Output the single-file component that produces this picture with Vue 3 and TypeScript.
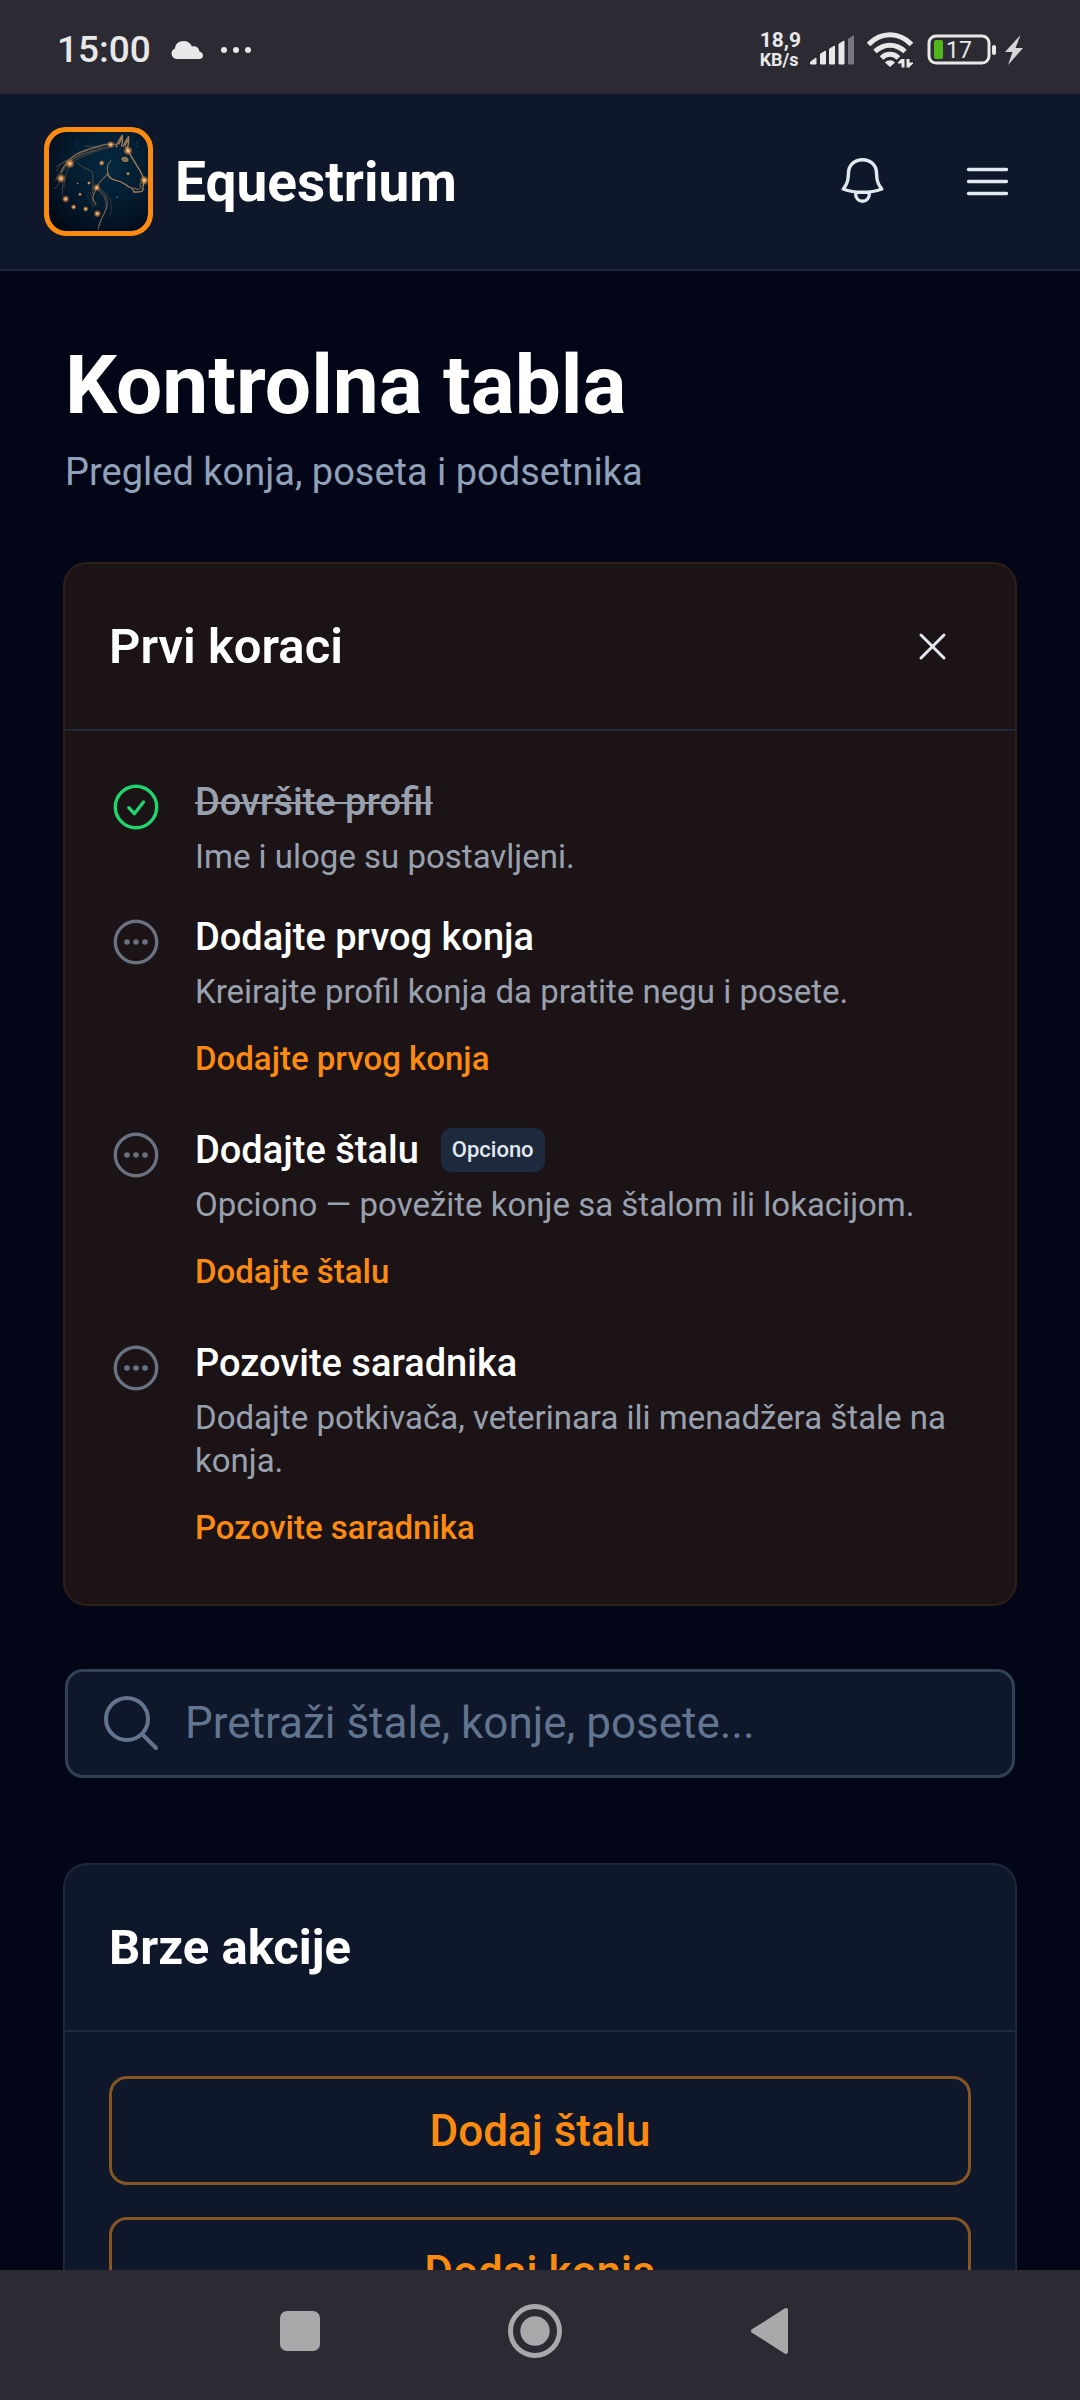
<script setup lang="ts">
import { ref } from 'vue'

interface Step {
  title: string
  text: string
  done?: boolean
  optional?: boolean
  action?: string
}

const steps: Step[] = [
  { title: 'Dovršite profil', text: 'Ime i uloge su postavljeni.', done: true },
  { title: 'Dodajte prvog konja', text: 'Kreirajte profil konja da pratite negu i posete.', action: 'Dodajte prvog konja' },
  { title: 'Dodajte štalu', text: 'Opciono — povežite konje sa štalom ili lokacijom.', optional: true, action: 'Dodajte štalu' },
  { title: 'Pozovite saradnika', text: 'Dodajte potkivača, veterinara ili menadžera štale na konja.', action: 'Pozovite saradnika' },
]

const actions = ['Dodaj štalu', 'Dodaj konja']
const query = ref('')

const stars = [
  [90, 131, 5], [63, 175, 5], [77, 237, 4], [172, 281, 4], [313, 181, 5], [264, 92, 5],
  [212, 74, 4], [185, 129, 3], [170, 203, 4], [101, 261, 3], [137, 267, 3], [120, 223, 2],
  [147, 189, 2], [264, 161, 2], [113, 190, 1],
]
</script>

<template>
  <div class="screen">
    <div class="status">
      <span class="time">15:00</span>
      <svg class="cloud" width="34" height="20" viewBox="0 0 34 20"><path d="M6 19a5.500 5.500 0 0 1-1-10.500C5 4 9 1 13.500 1c4 0 7 2 8.500 5.500 4-1 7 1.500 7.500 5 2 .5 3.500 2 3.500 4 0 2-1.500 3.500-3.500 3.500z" fill="#e8e8e8" /></svg>
      <svg class="dots" width="34" height="20" viewBox="0 0 34 20" fill="#e8e8e8"><circle cx="5" cy="10" r="3" /><circle cx="17" cy="10" r="3" /><circle cx="29" cy="10" r="3" /></svg>
      <div class="status-right">
        <div class="speed"><span class="rate">18,9</span><span class="unit">KB/s</span></div>
        <svg width="50" height="32" viewBox="0 0 50 32" fill="#e8e8e8">
          <path d="M1.500 28l5.500-4v6H1.500zM11.500 20l5-3v13h-5zM20.500 15l5-3v18h-5zM30 10l5-3v23h-5z" stroke="#e8e8e8" stroke-linejoin="round" />
          <path d="M39.500 5l5-3v28h-5z" fill="#79777d" stroke="#79777d" stroke-linejoin="round" />
        </svg>
        <svg width="52" height="36" viewBox="0 0 52 36" fill="none" stroke="#e8e8e8" stroke-width="5">
          <path d="M1.500 12.500C14-.5 32-.5 44.500 12.500M8 19.500c9-8.500 21-8.500 30 0M14.500 26c5-5 12-5 17 0" />
          <path d="M23 35l-5-4.500c3-3 7-3 10 0z" fill="#e8e8e8" stroke="none" />
          <path d="M36 35.500V27M41 27v8.500" stroke-width="3" />
          <path d="M31 31l3.500-4V31zM42 31h4l-4 4z" stroke-width="1" fill="#e8e8e8" />
        </svg>
        <svg width="69" height="32" viewBox="0 0 69 32">
          <rect x="2" y="2" width="60" height="27" rx="7" fill="none" stroke="#e8e8e8" stroke-width="3" />
          <rect x="7" y="6" width="9" height="19" rx="2" fill="#52b51b" />
          <rect x="65" y="11" width="4" height="10" rx="2" fill="#e8e8e8" />
          <text x="19" y="24" class="charge">17</text>
        </svg>
        <svg class="bolt" width="20" height="32" viewBox="0 0 20 32"><path d="M16.500 1L1 18h7.500L4 31l15-17h-7.500z" fill="#d6d5d8" /></svg>
      </div>
    </div>

    <header class="topbar">
      <div class="logo">
        <svg viewBox="27 36 297 297" role="img" aria-label="Equestrium logo">
          <defs>
            <radialGradient id="night" cx=".6" cy=".35" r=".75"><stop offset="0" stop-color="#05293f" /><stop offset=".55" stop-color="#041b2e" /><stop offset="1" stop-color="#020b18" /></radialGradient>
            <radialGradient id="glow"><stop offset="0" stop-color="#ffe9bd" /><stop offset=".3" stop-color="#f5a55c" stop-opacity=".9" /><stop offset="1" stop-color="#d87a30" stop-opacity="0" /></radialGradient>
          </defs>
          <rect x="27" y="36" width="297" height="297" fill="url(#night)" />
          <g fill="none" stroke="#a27e58" stroke-linecap="round" stroke-linejoin="round">
            <path d="M258 82c5 6 8 14 13 22 10 20 26 40 35 60 4 8 6 14 6 22-1 8-5 14-3 22 0 6-7 8-14 8h-13" stroke-width="4" />
            <path d="M282 216c-3-4-2-8-6-11-9-4-16-8-22-13-9-6-16-9-26-11-10-1-20-8-26-20" stroke-width="4" />
            <path d="M302 190c-4 5-2 11 2 15M281 203c5 5 11 6 18 4" stroke-width="3" />
            <path d="M229 80c2-12 9-22 18-34 1 10 2 20-2 32M250 79c3-12 8-19 16-29 0 11 1 21-4 35M237 72l8-18M256 76l7-16" stroke-width="4" />
            <path d="M246 117c5-7 14-6 18 3-3 7-15 5-18-3z" stroke-width="4" fill="#6e6350" />
            <path d="M213 122c-11 9-14 25-8 39-13 13-28 23-35 42-7 14-12 24-11 34l9 18" stroke-width="3" />
            <path d="M113 128c12 17 34 18 44 29 4 12 0 25 2 39-2 12-1 18-1 25" stroke-width="2" opacity=".7" />
            <path d="M228 73c-28-6-44 4-66 10-24 6-46 12-63 27-19 14-29 28-36 47" stroke-width="4" opacity=".75" />
            <path d="M232 79c-31-5-52 9-78 15-25 7-50 15-66 34-14 17-25 32-32 50M208 73c-18 1-29 7-43 7-12 2-20-3-30-2M184 82c-36 2-65 19-89 37-24 6-35 15-46 20M205 84c-38 6-74 26-102 38-18 17-31 42-31 78M164 91c-34 12-73 26-92 49M144 90c-28 9-46 17-57 27-18 8-29 17-37 35M90 131c-18 14-39 28-43 50M63 175c-8 17-9 27-20 30M63 175c8 18 3 34 5 51" stroke-width="2" opacity=".6" />
            <path d="M172 205c8 15 21 20 25 37 4 19-1 35-9 48-6 14-15 24-13 39M178 207c17 14 26 29 24 47-2 23-23 39-23 64" stroke-width="3" opacity=".6" />
            <path d="M180 206c30 17 42 47 29 82M151 218c6 18 6 30 12 42M139 225c12 15 20 29 19 40" stroke-width="2" opacity=".4" />
          </g>
          <circle v-for="([x, y, r], i) in stars" :key="i" :cx="x" :cy="y" :r="r * 3" fill="url(#glow)" />
          <g fill="#1c5d88"><circle cx="291" cy="68" r="2" /><circle cx="291" cy="80" r="2" /><circle cx="231" cy="232" r="3" /><circle cx="110" cy="72" r="2" /></g>
        </svg>
      </div>
      <span class="brand">Equestrium</span>
      <nav class="top-actions">
        <button type="button" aria-label="Obaveštenja">
          <svg width="65" height="65" viewBox="0 0 65 65"><path d="M13.200 40C16.500 36 18 32 18.200 28l.3-4C18.500 16 25 10.700 32.500 10.700S46.500 16 46.500 24l.3 4C47 32 48.500 36 51.800 40 46 42.200 39 43.300 32.500 43.300S19 42.200 13.200 40zM25.500 43.500C25.500 49 28.500 52.300 32.500 52.300S39.500 49 39.500 43.500" /></svg>
        </button>
        <button type="button" aria-label="Meni">
          <svg width="65" height="65" viewBox="0 0 65 65"><path d="M13.500 20.500h38M13.500 32.500h38M13.500 44.500h38" /></svg>
        </button>
      </nav>
    </header>

    <main class="content">
      <div class="heading">
        <h1>Kontrolna tabla</h1>
        <p>Pregled konja, poseta i podsetnika</p>
      </div>

      <section class="card onboarding">
        <div class="card-head">
          <h2>Prvi koraci</h2>
          <button type="button" class="close" aria-label="Zatvori">
            <svg width="43" height="43" viewBox="0 0 43 43"><path d="M10 10l23 23M33 10L10 33" /></svg>
          </button>
        </div>
        <ul class="steps">
          <li v-for="step in steps" :key="step.title" :class="{ done: step.done }">
            <svg class="mark" width="54" height="54" viewBox="0 0 54 54">
              <circle cx="27" cy="27" r="20.700" />
              <path v-if="step.done" d="M19.800 27.700l5.500 6L34.500 22" />
              <g v-else class="mark-dots"><circle cx="18" cy="27" r="2.800" /><circle cx="27" cy="27" r="2.800" /><circle cx="36" cy="27" r="2.800" /></g>
            </svg>
            <div class="step-body">
              <div class="step-title">
                <h3>{{ step.title }}</h3>
                <span v-if="step.optional" class="badge">Opciono</span>
              </div>
              <p>{{ step.text }}</p>
              <a v-if="step.action" href="#">{{ step.action }}</a>
            </div>
          </li>
        </ul>
      </section>

      <label class="search">
        <svg width="65" height="65" viewBox="0 0 65 65"><circle cx="29" cy="28" r="21" /><path d="M44 43l14 14" /></svg>
        <input v-model="query" type="search" placeholder="Pretraži štale, konje, posete..." aria-label="Pretraga" />
      </label>

      <section class="card quick">
        <div class="card-head"><h2>Brze akcije</h2></div>
        <div class="quick-list">
          <button v-for="label in actions" :key="label" type="button">{{ label }}</button>
        </div>
      </section>
    </main>

    <nav class="navbar">
      <button type="button" aria-label="Nedavno"><svg width="56" height="56" viewBox="0 0 56 56"><rect x="8" y="8" width="40" height="40" rx="7" /></svg></button>
      <button type="button" aria-label="Početna"><svg width="56" height="56" viewBox="0 0 56 56"><circle cx="28" cy="28" r="24.500" fill="none" stroke="#a9a8ab" stroke-width="5" /><circle cx="28" cy="28" r="14.700" /></svg></button>
      <button type="button" aria-label="Nazad"><svg width="56" height="56" viewBox="0 0 56 56"><path d="M11 28L44 7v42z" stroke="#a9a8ab" stroke-width="4" stroke-linejoin="round" /></svg></button>
    </nav>
  </div>
</template>

<style>
body {
  background: #020617;
}
</style>

<style scoped>
.screen {
  display: flex;
  flex-direction: column;
  height: 100vh;
  overflow: hidden;
  background: #020617;
  color: #fff;
  font-family: Roboto, "Noto Sans", sans-serif;
}

* {
  box-sizing: border-box;
}

h1, h2, h3, p, ul {
  margin: 0;
  padding: 0;
}

button {
  padding: 0;
  border: 0;
  background: none;
  font: inherit;
}

svg {
  display: block;
  flex: none;
}

.status {
  display: flex;
  flex: none;
  align-items: center;
  height: 94px;
  padding: 6px 56px 0 57px;
  background: #2c2a33;
  color: #e8e8e8;
}

.time {
  font-size: 37px;
  font-weight: 500;
  line-height: 44px;
}

.cloud {
  margin-left: 19px;
}

.dots {
  margin-left: 15px;
}

.status-right {
  display: flex;
  align-items: center;
  gap: 8px;
  margin-left: auto;
}

.speed {
  display: flex;
  flex-direction: column;
  font-weight: 700;
}

.rate {
  font-size: 21px;
  line-height: 19px;
}

.unit {
  font-size: 18px;
  line-height: 19px;
}

.charge {
  fill: #e8e8e8;
  font-size: 23px;
}

.topbar {
  display: flex;
  flex: none;
  align-items: center;
  gap: 22px;
  height: 177px;
  padding: 0 44px;
  border-bottom: 2px solid #1d293a;
  background: #0f172a;
}

.logo {
  width: 109px;
  height: 109px;
  overflow: hidden;
  border: 5px solid #fb8b10;
  border-radius: 22px;
  background: #fb8b10;
}

.logo svg {
  width: 99px;
  height: 99px;
  border-radius: 17px;
}

.brand {
  font-size: 55px;
  font-weight: 700;
  line-height: 76px;
}

.top-actions {
  display: flex;
  gap: 28px;
  margin-left: auto;
}

.top-actions button {
  display: grid;
  place-items: center;
  width: 97px;
  height: 97px;
}

.top-actions path {
  fill: none;
  stroke: #e2e8f0;
  stroke-width: 3.400;
  stroke-linecap: round;
  stroke-linejoin: round;
}

.content {
  display: flex;
  flex: 1;
  flex-direction: column;
  gap: 65px;
  min-height: 0;
  padding: 66px 65px 0;
  overflow: hidden;
}

.heading {
  flex: none;
}

h1 {
  font-size: 82px;
  font-weight: 700;
  line-height: 97px;
}

.heading p {
  margin-top: 11px;
  color: #90a1b9;
  font-size: 38px;
  line-height: 54px;
}

.card {
  flex: none;
  border-radius: 22px;
}

.onboarding {
  background: #1c1316;
  box-shadow: 0 0 0 2px #2f1e18;
}

.card-head {
  display: flex;
  align-items: center;
  justify-content: space-between;
  height: 167px;
  padding: 0 44px;
  border-bottom: 2px solid #1e293b;
}

h2 {
  font-size: 49px;
  font-weight: 700;
  line-height: 65px;
}

.onboarding h2 {
  font-weight: 600;
}

.onboarding .card-head {
  border-bottom-color: #212839;
}

.close {
  display: grid;
  place-items: center;
  width: 78px;
  height: 78px;
}

.close path {
  fill: none;
  stroke: #e2e8f0;
  stroke-width: 3;
  stroke-linecap: round;
}

.steps {
  display: flex;
  flex-direction: column;
  gap: 32px;
  padding: 44px;
  list-style: none;
}

.steps li {
  display: flex;
  align-items: flex-start;
  gap: 32px;
}

.mark {
  margin-top: 5px;
  fill: none;
  stroke: #6a7282;
  stroke-width: 3.400;
  stroke-linecap: round;
  stroke-linejoin: round;
}

.mark-dots {
  fill: #6a7282;
  stroke: none;
}

.done .mark {
  stroke: #1cd670;
}

.step-body {
  flex: 1;
}

.step-title {
  display: flex;
  align-items: center;
  gap: 22px;
}

h3 {
  font-size: 38px;
  font-weight: 500;
  line-height: 54px;
}

.done h3 {
  color: #99a1af;
  text-decoration: line-through;
  text-decoration-thickness: 2px;
}

.badge {
  padding: 0 11px;
  border-radius: 11px;
  background: #1d293d;
  color: #e2e8f0;
  font-size: 22px;
  font-weight: 500;
  line-height: 44px;
}

.step-body p {
  margin-top: 6px;
  color: #99a1af;
  font-size: 33px;
  line-height: 43px;
}

.step-body a {
  display: block;
  width: fit-content;
  margin-top: 13px;
  color: #fb8b10;
  font-size: 33px;
  font-weight: 500;
  line-height: 65px;
  text-decoration: none;
}

.search {
  display: flex;
  flex: none;
  align-items: center;
  gap: 22px;
  height: 109px;
  margin-bottom: 22px;
  padding: 0 30px;
  border: 3px solid #314158;
  border-radius: 18px;
  background: #0f172a;
}

.search svg {
  fill: none;
  stroke: #62748e;
  stroke-width: 4;
  stroke-linecap: round;
}

.search input {
  flex: 1;
  min-width: 0;
  padding: 0;
  border: 0;
  outline: 0;
  background: none;
  color: #e2e8f0;
  font: inherit;
  font-size: 44px;
  line-height: 65px;
}

.search input::placeholder {
  color: #62748e;
  opacity: 1;
}

.quick {
  background: #0f172a;
  box-shadow: 0 0 0 2px #1d283a;
}

.quick-list {
  display: flex;
  flex-direction: column;
  gap: 32px;
  padding: 44px;
}

.quick-list button {
  height: 109px;
  border: 3px solid #855522;
  border-radius: 18px;
  color: #fb8b10;
  font-size: 44px;
  font-weight: 500;
}

.navbar {
  display: flex;
  flex: none;
  justify-content: center;
  gap: 179px;
  height: 130px;
  padding: 0 10px 8px 0;
  background: #2c2a33;
}

.navbar svg {
  fill: #a9a8ab;
}
</style>
